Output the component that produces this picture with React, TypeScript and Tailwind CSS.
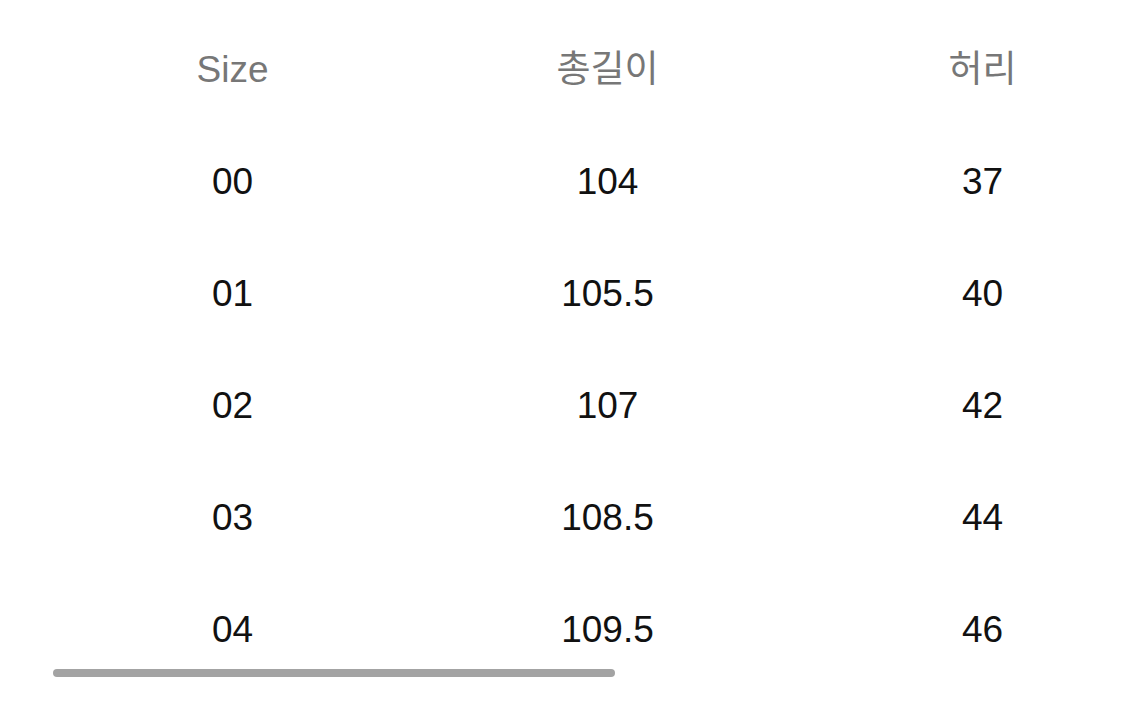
const header = ['Size', '총길이', '허리']
const rows = [
  ['00', '104', '37'],
  ['01', '105.5', '40'],
  ['02', '107', '42'],
  ['03', '108.5', '44'],
  ['04', '109.5', '46'],
]

export default function App() {
  return (
    <div
      className="relative h-[717px] w-[1125px] overflow-hidden bg-white pl-[45px] pt-[14px]"
      style={{ fontFamily: '"Liberation Sans", "Noto Sans CJK KR", sans-serif' }}
    >
      <div className="grid w-[1125px] grid-cols-[375px_375px_375px] text-[37px]">
        {header.map((h) => (
          <div key={h} className="flex h-[112px] items-center justify-center text-[#777777]">
            {h}
          </div>
        ))}
        {rows.map((r) =>
          r.map((c, i) => (
            <div key={r[0] + i} className="flex h-[112px] items-center justify-center text-[#111111]">
              {c}
            </div>
          ))
        )}
      </div>
      <div className="absolute left-[53px] top-[669px] h-[8px] w-[562px] rounded-full bg-[#a3a3a3]" />
    </div>
  )
}
